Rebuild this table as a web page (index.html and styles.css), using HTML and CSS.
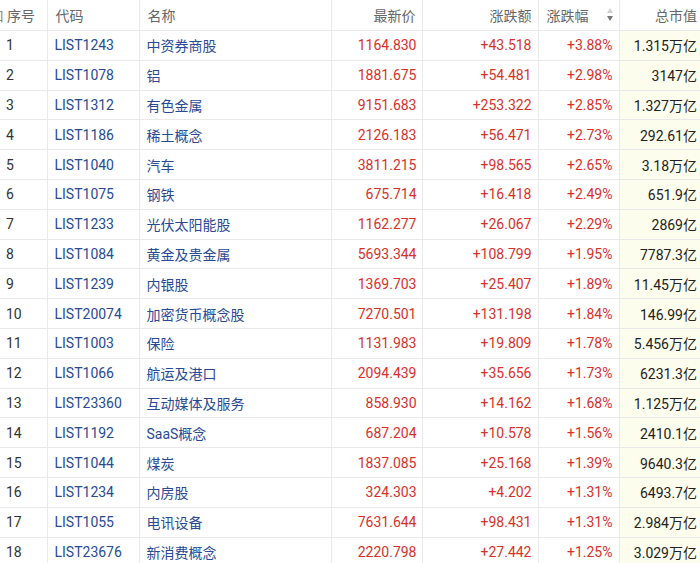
FILE: index.html
```html
<!DOCTYPE html>
<html lang="zh">
<head>
<meta charset="utf-8">
<link rel="stylesheet" href="styles.css">
</head>
<body>
<div class="wrap">
<table class="grid">
<colgroup>
<col class="c-no"><col class="c-code"><col class="c-name"><col class="c-price"><col class="c-chg"><col class="c-pct"><col class="c-cap">
</colgroup>
<thead>
<tr>
<th class="no"><span class="clip">口</span>序号</th>
<th class="left">代码</th>
<th class="left">名称</th>
<th class="right">最新价</th>
<th class="right">涨跌额</th>
<th class="left sort">涨跌幅<span class="arrows"><span class="up"></span><span class="down"></span></span></th>
<th class="right caph">总市值</th>
</tr>
</thead>
<tbody>
<tr><td class="no">1</td><td class="code">LIST1243</td><td class="name">中资券商股</td><td class="red">1164.830</td><td class="red">+43.518</td><td class="red">+3.88%</td><td class="cap">1.315万亿</td></tr>
<tr><td class="no">2</td><td class="code">LIST1078</td><td class="name">铝</td><td class="red">1881.675</td><td class="red">+54.481</td><td class="red">+2.98%</td><td class="cap">3147亿</td></tr>
<tr><td class="no">3</td><td class="code">LIST1312</td><td class="name">有色金属</td><td class="red">9151.683</td><td class="red">+253.322</td><td class="red">+2.85%</td><td class="cap">1.327万亿</td></tr>
<tr><td class="no">4</td><td class="code">LIST1186</td><td class="name">稀土概念</td><td class="red">2126.183</td><td class="red">+56.471</td><td class="red">+2.73%</td><td class="cap">292.61亿</td></tr>
<tr><td class="no">5</td><td class="code">LIST1040</td><td class="name">汽车</td><td class="red">3811.215</td><td class="red">+98.565</td><td class="red">+2.65%</td><td class="cap">3.18万亿</td></tr>
<tr><td class="no">6</td><td class="code">LIST1075</td><td class="name">钢铁</td><td class="red">675.714</td><td class="red">+16.418</td><td class="red">+2.49%</td><td class="cap">651.9亿</td></tr>
<tr><td class="no">7</td><td class="code">LIST1233</td><td class="name">光伏太阳能股</td><td class="red">1162.277</td><td class="red">+26.067</td><td class="red">+2.29%</td><td class="cap">2869亿</td></tr>
<tr><td class="no">8</td><td class="code">LIST1084</td><td class="name">黄金及贵金属</td><td class="red">5693.344</td><td class="red">+108.799</td><td class="red">+1.95%</td><td class="cap">7787.3亿</td></tr>
<tr><td class="no">9</td><td class="code">LIST1239</td><td class="name">内银股</td><td class="red">1369.703</td><td class="red">+25.407</td><td class="red">+1.89%</td><td class="cap">11.45万亿</td></tr>
<tr><td class="no">10</td><td class="code">LIST20074</td><td class="name">加密货币概念股</td><td class="red">7270.501</td><td class="red">+131.198</td><td class="red">+1.84%</td><td class="cap">146.99亿</td></tr>
<tr><td class="no">11</td><td class="code">LIST1003</td><td class="name">保险</td><td class="red">1131.983</td><td class="red">+19.809</td><td class="red">+1.78%</td><td class="cap">5.456万亿</td></tr>
<tr><td class="no">12</td><td class="code">LIST1066</td><td class="name">航运及港口</td><td class="red">2094.439</td><td class="red">+35.656</td><td class="red">+1.73%</td><td class="cap">6231.3亿</td></tr>
<tr><td class="no">13</td><td class="code">LIST23360</td><td class="name">互动媒体及服务</td><td class="red">858.930</td><td class="red">+14.162</td><td class="red">+1.68%</td><td class="cap">1.125万亿</td></tr>
<tr><td class="no">14</td><td class="code">LIST1192</td><td class="name">SaaS概念</td><td class="red">687.204</td><td class="red">+10.578</td><td class="red">+1.56%</td><td class="cap">2410.1亿</td></tr>
<tr><td class="no">15</td><td class="code">LIST1044</td><td class="name">煤炭</td><td class="red">1837.085</td><td class="red">+25.168</td><td class="red">+1.39%</td><td class="cap">9640.3亿</td></tr>
<tr><td class="no">16</td><td class="code">LIST1234</td><td class="name">内房股</td><td class="red">324.303</td><td class="red">+4.202</td><td class="red">+1.31%</td><td class="cap">6493.7亿</td></tr>
<tr><td class="no">17</td><td class="code">LIST1055</td><td class="name">电讯设备</td><td class="red">7631.644</td><td class="red">+98.431</td><td class="red">+1.31%</td><td class="cap">2.984万亿</td></tr>
<tr><td class="no">18</td><td class="code">LIST23676</td><td class="name">新消费概念</td><td class="red">2220.798</td><td class="red">+27.442</td><td class="red">+1.25%</td><td class="cap">3.029万亿</td></tr>
</tbody>
</table>
</div>
</body>
</html>
```
FILE: styles.css
```css
html, body {
  margin: 0;
  padding: 0;
  background: #fff;
}
.wrap {
  width: 700px;
  height: 563px;
  overflow: hidden;
}
.grid {
  border-collapse: collapse;
  table-layout: fixed;
  width: 700px;
  font-family: "Roboto", "Noto Sans CJK SC", sans-serif;
  font-size: 14px;
  color: #333;
}
.c-no { width: 47px; }
.c-code { width: 92px; }
.c-name { width: 192px; }
.c-price { width: 91px; }
.c-chg { width: 116px; }
.c-pct { width: 81px; }
.c-cap { width: 81px; }
th, td {
  border: 1px solid #e9e9e9;
  white-space: nowrap;
  overflow: hidden;
  padding: 0 6px;
  text-align: right;
}
th {
  height: 30px;
  font-weight: normal;
  color: #666;
  border-top: none;
}
td {
  height: 28.8px;
}
th:first-child, td:first-child { border-left: none; }
th:last-child, td:last-child { border-right: none; padding-right: 3px; padding-left: 0; }
th.left { text-align: left; padding-left: 8px; }
th.right { text-align: right; }
th.no {
  text-align: left;
  padding-left: 0;
}
.clip {
  display: inline-block;
  width: 4px;
  overflow: hidden;
  direction: rtl;
  vertical-align: top;
  margin-right: 3px;
  color: #888;
}
td.no { text-align: left; padding-left: 6px; color: #333; }
td.code, td.name { text-align: left; color: #294a94; padding-left: 7px; }
td.red { color: #d9302a; }
td.red:nth-child(4) { padding-right: 5px; }
td.red:nth-child(6) { padding-right: 6px; }
td.cap { background: #fdfdee; text-align: right; color: #222; }
.sort { position: relative; }
.arrows {
  position: absolute;
  right: 6px;
  top: 8px;
  display: flex;
  flex-direction: column;
  gap: 3px;
}
.up {
  width: 0; height: 0;
  border-left: 3.5px solid transparent;
  border-right: 3.5px solid transparent;
  border-bottom: 5px solid #cfcfcf;
}
.down {
  width: 0; height: 0;
  border-left: 3.5px solid transparent;
  border-right: 3.5px solid transparent;
  border-top: 5px solid #777;
}
```
